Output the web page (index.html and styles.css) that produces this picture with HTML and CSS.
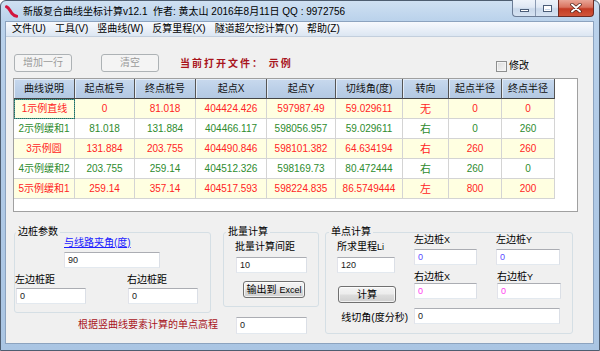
FILE: index.html
```html
<!DOCTYPE html>
<html lang="zh-CN">
<head>
<meta charset="utf-8">
<title>新版复合曲线坐标计算v12.1</title>
<link rel="stylesheet" href="styles.css">
</head>
<body>
<div class="window">
  <div class="titlebar">
    <svg class="appicon" viewBox="0 0 13 13" width="13" height="13">
      <path d="M1.5 1.8 C4 2.5 5 6 7 8.5 C8.5 10.3 10 11 11.8 11.2" fill="none" stroke="#d3153d" stroke-width="3" stroke-linecap="round"/>
    </svg>
    <span class="title">新版复合曲线坐标计算v12.1&nbsp; 作者: 黄太山 2016年8月11日 QQ : 9972756</span>
    <div class="controls">
      <div class="ctl-group">
        <div class="ctl ctl-min"><span class="min-glyph"></span></div>
        <div class="ctl ctl-max"><span class="max-glyph"></span></div>
      </div>
      <div class="ctl-close">
        <svg viewBox="0 0 12 10" width="12" height="10"><path d="M2 1.5 L10 8.5 M10 1.5 L2 8.5" stroke="#4a1c14" stroke-width="3.4" stroke-linecap="round"/><path d="M2 1.5 L10 8.5 M10 1.5 L2 8.5" stroke="#ffffff" stroke-width="2" stroke-linecap="round"/></svg>
      </div>
    </div>
  </div>
  <div class="frame">
    <div class="client">
      <div class="menubar">
        <span class="mi">文件(U)</span>
        <span class="mi">工具(V)</span>
        <span class="mi">竖曲线(W)</span>
        <span class="mi">反算里程(X)</span>
        <span class="mi">隧道超欠挖计算(Y)</span>
        <span class="mi">帮助(Z)</span>
      </div>

      <div class="toolbar">
        <button class="btn btn-disabled">增加一行</button>
        <button class="btn btn-disabled btn-clear">清空</button>
        <span class="curfile">当前打开文件： 示例</span>
        <label class="check"><span class="checkbox"></span><span>修改</span></label>
      </div>

      <div class="gridwrap">
        <table class="grid">
          <thead>
            <tr>
              <th class="c1">曲线说明</th>
              <th class="c2">起点桩号</th>
              <th class="c3">终点桩号</th>
              <th class="c4">起点X</th>
              <th class="c5">起点Y</th>
              <th class="c6">切线角(度)</th>
              <th class="c7">转向</th>
              <th class="c8">起点半径</th>
              <th class="c9">终点半径</th>
            </tr>
          </thead>
          <tbody>
            <tr class="odd">
              <td class="focus">1示例直线</td><td>0</td><td>81.018</td><td>404424.426</td><td>597987.49</td><td>59.029611</td><td class="cj">无</td><td>0</td><td>0</td>
            </tr>
            <tr class="even">
              <td>2示例缓和1</td><td>81.018</td><td>131.884</td><td>404466.117</td><td>598056.957</td><td>59.029611</td><td class="cj">右</td><td>0</td><td>260</td>
            </tr>
            <tr class="odd">
              <td>3示例圆</td><td>131.884</td><td>203.755</td><td>404490.846</td><td>598101.382</td><td>64.634194</td><td class="cj">右</td><td>260</td><td>260</td>
            </tr>
            <tr class="even">
              <td>4示例缓和2</td><td>203.755</td><td>259.14</td><td>404512.326</td><td>598169.73</td><td>80.472444</td><td class="cj">右</td><td>260</td><td>0</td>
            </tr>
            <tr class="odd">
              <td>5示例缓和1</td><td>259.14</td><td>357.14</td><td>404517.593</td><td>598224.835</td><td>86.5749444</td><td class="cj">左</td><td>800</td><td>200</td>
            </tr>
          </tbody>
        </table>
      </div>

      <div class="bottom">
        <fieldset class="grp grp-side">
          <legend>边桩参数</legend>
          <a class="link" href="#">与线路夹角(度)</a>
          <div class="tb tb-angle">90</div>
          <div class="side-grid">
            <div class="lbl">左边桩距</div>
            <div class="lbl">右边桩距</div>
            <div class="tb tb-side">0</div>
            <div class="tb tb-side">0</div>
          </div>
        </fieldset>

        <fieldset class="grp grp-batch">
          <legend>批量计算</legend>
          <div class="lbl batch-lbl">批量计算间距</div>
          <div class="tb tb-batch">10</div>
          <button class="btn btn-excel">输出到 <span class="sm">Excel</span></button>
        </fieldset>

        <fieldset class="grp grp-single">
          <legend>单点计算</legend>
          <div class="sp-top">
            <div class="sp-left">
              <div class="lbl sp-lbl">所求里程<span class="sm">Li</span></div>
              <div class="tb tb-li">120</div>
              <button class="btn btn-calc">计算</button>
            </div>
            <div class="sp-right">
              <div class="lbl">左边桩<span class="sm">X</span></div>
              <div class="lbl">左边桩<span class="sm">Y</span></div>
              <div class="tb tb-xy tb-blue">0</div>
              <div class="tb tb-xy tb-blue">0</div>
              <div class="lbl lbl-r2">右边桩<span class="sm">X</span></div>
              <div class="lbl lbl-r2">右边桩<span class="sm">Y</span></div>
              <div class="tb tb-xy tb-pink">0</div>
              <div class="tb tb-xy tb-pink">0</div>
            </div>
          </div>
          <div class="sp-bottom">
            <div class="lbl sp-angle">线切角(度分秒)</div>
            <div class="tb tb-angle2">0</div>
          </div>
        </fieldset>

        <div class="elev-lbl">根据竖曲线要素计算的单点高程</div>
        <div class="elev-cell"><div class="tb tb-elev">0</div></div>
      </div>
    </div>
  </div>
</div>
</body>
</html>
```
FILE: styles.css
```css
* { box-sizing: border-box; }
html, body { margin: 0; padding: 0; }
body {
  width: 600px;
  height: 351px;
  overflow: hidden;
  font-family: "Liberation Sans", "Noto Sans CJK SC", sans-serif;
  font-size: 10px;
  line-height: 12px;
  color: #000;
  background: #fff;
}

.window {
  width: 600px;
  height: 351px;
  display: flex;
  flex-direction: column;
  border: 1px solid #4e5d70;
  border-radius: 6px 6px 0 0;
  background: linear-gradient(180deg, #cfe0f2 0px, #bad2eb 20px, #b2cbe7 120px, #aac5e3 351px);
}

/* title bar */
.titlebar {
  height: 20px;
  display: flex;
  align-items: flex-start;
}
.appicon { margin: 4px 0 0 4px; flex: none; }
.title {
  margin: 5px 0 0 5px;
  font-size: 10px;
  line-height: 12px;
  color: #000;
  white-space: nowrap;
}
.controls {
  margin-left: auto;
  margin-right: 5px;
  margin-top: -1px;
  display: flex;
  height: 17px;
}
.ctl-group {
  display: flex;
  border: 1px solid #6b7c95;
  border-top: none;
  border-right: none;
  border-radius: 0 0 0 4px;
  background: linear-gradient(180deg, #eef3fa 0%, #dfe8f4 45%, #c9d8ea 55%, #d6e3f2 100%);
}
.ctl {
  height: 16px;
  display: flex;
  align-items: center;
  justify-content: center;
}
.ctl-min { width: 23px; border-right: 1px solid #8a9ab2; }
.ctl-max { width: 22px; }
.min-glyph {
  width: 9px;
  height: 3px;
  margin-top: 5px;
  background: #fff;
  border: 1px solid #4b5d77;
}
.max-glyph {
  width: 9px;
  height: 7px;
  border: 1px solid #4b5d77;
  box-shadow: inset 0 0 0 1px #fff, inset 0 2px 0 1px #fff;
}
.ctl-close {
  width: 36px;
  height: 17px;
  display: flex;
  align-items: center;
  justify-content: center;
  border: 1px solid #6e2a22;
  border-top: none;
  border-radius: 0 0 4px 0;
  background: linear-gradient(180deg, #e9a596 0%, #d9735f 45%, #c43b24 55%, #d0553a 100%);
}

/* frame */
.frame {
  flex: 1;
  display: flex;
  padding: 0 5px 6px 4px;
}
.client {
  flex: 1;
  display: flex;
  flex-direction: column;
  border: 1px solid #8ca3bf;
  background: #f0f0f0;
}

/* menu */
.menubar {
  height: 15px;
  display: flex;
  align-items: center;
  padding-left: 6px;
  gap: 9px;
  border-bottom: 1px solid #c3cfdd;
  background: linear-gradient(180deg, #f7f9fd 0%, #eaf0f8 50%, #dce6f2 100%);
}
.mi { line-height: 14px; white-space: nowrap; }

/* toolbar */
.toolbar {
  margin-top: 17px;
  height: 18px;
  padding-left: 8px;
  display: flex;
  align-items: flex-start;
}
.btn {
  font-family: "Liberation Sans", "Noto Sans CJK SC", sans-serif;
  font-size: 10px;
  line-height: 12px;
  padding: 0;
  border: 1px solid #707070;
  border-radius: 3px;
  color: #000;
  background: linear-gradient(180deg, #f4f4f4 0%, #ececec 48%, #dddddd 52%, #cfcfcf 100%);
  box-shadow: inset 0 0 0 1px rgba(255,255,255,0.7);
}
.btn-disabled {
  width: 58px;
  height: 18px;
  color: #9a9a9a;
  border-color: #adb2b5;
  background: #f4f4f4;
  box-shadow: none;
}
.btn-clear { margin-left: 29px; }
.curfile {
  margin-left: 21px;
  margin-top: 4px;
  font-weight: bold;
  letter-spacing: 2px;
  color: #a8141c;
  white-space: nowrap;
}
.check {
  margin-left: auto;
  margin-right: 64px;
  margin-top: 6px;
  display: flex;
  align-items: center;
  gap: 2px;
}
.checkbox {
  width: 11px;
  height: 11px;
  border: 1px solid #8e8f8f;
  background: linear-gradient(135deg, #dcdcdc, #f6f6f6);
  box-shadow: inset 0 0 0 1px #f4f4f4;
}

/* grid */
.gridwrap {
  margin-top: 6px;
  margin-left: 7px;
  width: 565px;
  height: 134px;
  border: 1px solid #a0a0a0;
  background: #fff;
}
.grid {
  border-collapse: separate;
  border-spacing: 0;
  table-layout: fixed;
  width: 541px;
}
.grid th, .grid td {
  height: 20px;
  padding: 0;
  text-align: center;
  white-space: nowrap;
  overflow: hidden;
  font-weight: normal;
  line-height: 12px;
}
.grid th {
  color: #111;
  background: linear-gradient(180deg, #c8d9ee 0%, #bcd0e8 50%, #b4c9e3 100%);
  border-right: 1px solid #555;
  border-bottom: 1px solid #444;
  box-shadow: inset 1px 1px 0 #e4edf8;
}
.grid td {
  border-right: 1px solid #d4d4d4;
  border-bottom: 1px solid #d4d4d4;
}
.c1 { width: 61px; }
.c2 { width: 60px; }
.c3 { width: 61px; }
.c4 { width: 71px; }
.c5 { width: 69px; }
.c6 { width: 67px; }
.c7 { width: 46px; }
.c8 { width: 53px; }
.c9 { width: 53px; }
.odd td { background: #ffffe1; color: #ff2424; }
.even td { background: #fff; color: #2e8b2e; }
.grid td.cj { font-size: 11px; }
.grid td.focus {
  outline: 1px dotted #1f6e64;
  outline-offset: -1px;
  border: 1px solid #5a9990;
}

/* bottom */
.bottom {
  margin-top: 14px;
  padding-left: 8px;
  display: grid;
  grid-template-columns: 209px 102px 248px;
  grid-template-rows: auto auto;
}
.grp {
  margin: 0;
  padding: 0;
  min-width: 0;
  border: 1px solid #d5dfe5;
  border-radius: 3px;
}
.grp legend {
  padding: 0 2px;
  line-height: 12px;
  font-size: 10px;
}
.lbl { line-height: 12px; white-space: nowrap; }
.sm { font-size: 9px; }
.tb {
  height: 16px;
  padding-left: 3px;
  line-height: 14px;
  font-size: 9px;
  background: #fff;
  border: 1px solid;
  border-color: #abadb3 #dbdfe6 #e3e9ef #e2e3ea;
  color: #1a1a1a;
}

.grp-side {
  grid-column: 1;
  grid-row: 1;
  width: 197px;
  padding-bottom: 8px;
}
.grp-side legend { margin-left: 1px; }
.link {
  display: block;
  margin: -1px 0 0 49px;
  color: #2020ff;
  text-decoration: underline;
  line-height: 12px;
  width: max-content;
}
.tb-angle { margin: 3px 0 0 49px; width: 96px; }
.side-grid {
  margin-top: 6px;
  display: grid;
  grid-template-columns: 112px 1fr;
  row-gap: 2px;
}
.tb-side { width: 70px; margin-left: 1px; }

.grp-batch {
  grid-column: 2;
  grid-row: 1;
  align-self: start;
  width: 96px;
  padding: 0 0 8px 11px;
}
.grp-batch legend { margin-left: -9px; }
.batch-lbl { margin-top: 3px; }
.tb-batch { margin: 4px 0 0 1px; width: 71px; }
.btn-excel {
  display: block;
  margin: 8px 0 0 8px;
  width: 62px;
  height: 17px;
}

.grp-single {
  grid-column: 3;
  grid-row: 1 / span 2;
  width: 248px;
  padding: 0 0 8px 11px;
}
.grp-single legend { margin-left: -8px; }
.sp-top {
  margin-top: -4px;
  display: flex;
}
.sp-left { width: 77px; }
.sp-lbl { margin-top: 7px; }
.tb-li { margin-top: 4px; width: 58px; }
.btn-calc {
  display: block;
  margin: 13px 0 0 1px;
  width: 58px;
  height: 17px;
}
.sp-right {
  display: grid;
  grid-template-columns: 82px 64px;
  grid-template-rows: 12px 16px 12px 16px;
  row-gap: 3px;
}
.sp-right .lbl-r2 { margin-top: 3px; }
.tb-xy { width: 63px; }
.sp-right .tb-xy:nth-child(4), .sp-right .tb-xy:nth-child(8) { width: 64px; }
.sp-right .lbl:nth-child(6), .sp-right .tb-xy:nth-child(8) { margin-left: 1px; }
.tb-blue { color: #5a4cff; }
.tb-pink { color: #ff3cf0; }
.sp-bottom {
  margin-top: 5px;
  display: flex;
  align-items: center;
}
.sp-angle {
  width: 77px;
  text-align: right;
  padding-right: 6px;
  margin-top: 4px;
}
.tb-angle2 { width: 146px; }

.elev-lbl {
  grid-column: 1;
  grid-row: 2;
  text-align: right;
  padding-right: 5px;
  margin-top: 6px;
  color: #a8141c;
  white-space: nowrap;
}
.elev-cell {
  grid-column: 2;
  grid-row: 2;
  padding: 4px 0 0 13px;
}
.tb-elev { width: 71px; height: 17px; }
```
